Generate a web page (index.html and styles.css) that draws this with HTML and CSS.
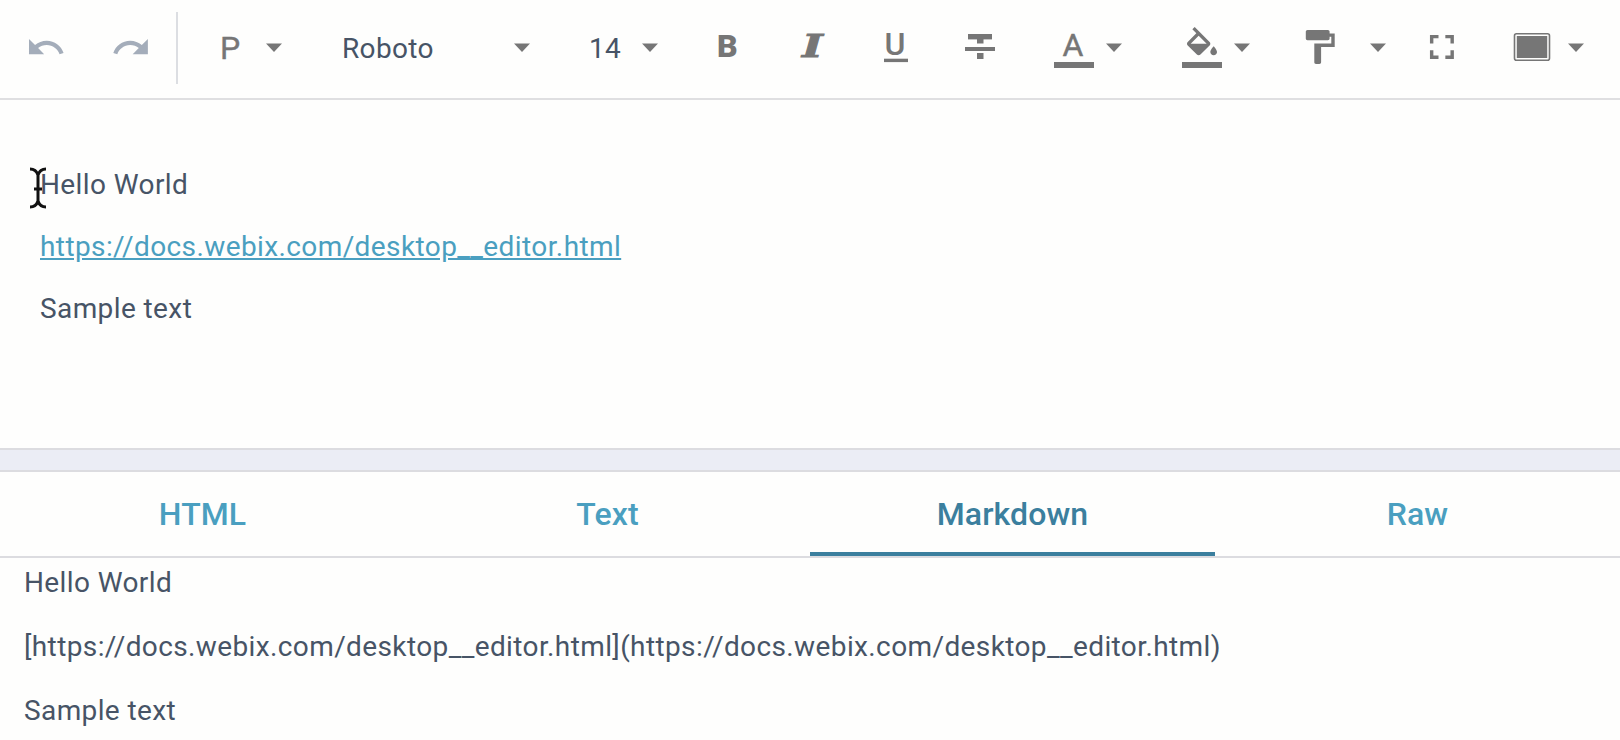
FILE: index.html
```html
<!DOCTYPE html>
<html lang="en">
<head>
<meta charset="utf-8">
<title>Editor</title>
<link rel="stylesheet" href="styles.css">
</head>
<body>
<div class="toolbar">
  <svg class="cell w88" viewBox="0 0 88 98"><path class="muted" transform="translate(25.6 27.2) scale(1.69)" d="M12.5 8c-2.65 0-5.05.99-6.9 2.6L2 7v9h9l-3.62-3.62c1.39-1.16 3.16-1.88 5.12-1.88 3.54 0 6.55 2.31 7.6 5.5l2.37-.78C21.08 11.03 17.15 8 12.5 8z"/></svg>
  <svg class="cell w88" viewBox="88 0 88 98"><path class="muted" transform="translate(110.7 27.2) scale(1.69)" d="M18.4 10.6C16.55 8.99 14.15 8 11.5 8c-4.65 0-8.58 3.03-9.96 7.22L3.9 16c1.05-3.19 4.05-5.5 7.6-5.5 1.95 0 3.73.72 5.12 1.88L13 16h9V7l-3.6 3.6z"/></svg>
  <div class="sep"></div>
  <svg class="cell w122" viewBox="178 0 122 98"><text class="label grey" x="220" y="59">P</text><polygon class="ico" points="266,43.5 282,43.5 274,52"/></svg>
  <svg class="cell w270" viewBox="300 0 270 98"><text class="label" x="342" y="58">Roboto</text><polygon class="ico" points="514,43.5 530,43.5 522,52"/></svg>
  <svg class="cell w130" viewBox="570 0 130 98"><text class="label" x="589" y="58">14</text><polygon class="ico" points="642,43.5 658,43.5 650,52"/></svg>
  <svg class="cell w80" viewBox="700 0 80 98"><text class="bold" x="717" y="57">B</text></svg>
  <svg class="cell w80" viewBox="780 0 80 98"><text class="ital" transform="translate(802 57) scale(1.4 1)">I</text></svg>
  <svg class="cell w80" viewBox="860 0 80 98"><text class="under" x="884.5" y="55">U</text><rect class="ico" x="884" y="58.7" width="24" height="3.4"/></svg>
  <svg class="cell w100" viewBox="940 0 100 98"><rect class="ico" x="968" y="34" width="24" height="5.4"/><rect class="ico" x="977" y="34" width="6.5" height="9.5"/><rect class="ico" x="965" y="47" width="30" height="4"/><rect class="ico" x="977" y="53" width="6.5" height="6"/></svg>
  <svg class="cell w130" viewBox="1040 0 130 98"><text class="accent" x="1062.5" y="56">A</text><rect class="ico" x="1054" y="62" width="40" height="6"/><polygon class="ico" points="1106,43.5 1122,43.5 1114,52"/></svg>
  <svg class="cell w120" viewBox="1170 0 120 98"><path class="ico" transform="translate(1182 27) scale(1.667)" d="M16.56 8.94L7.62 0 6.21 1.41l2.38 2.38-5.15 5.15c-.59.59-.59 1.54 0 2.12l5.5 5.5c.29.29.68.44 1.06.44s.77-.15 1.06-.44l5.5-5.5c.59-.58.59-1.53 0-2.12zM5.21 10L10 5.21 14.79 10H5.21zM19 11.5s-2 2.17-2 3.5c0 1.1.9 2 2 2s2-.9 2-2c0-1.33-2-3.5-2-3.5z"/><rect class="ico" x="1182" y="62" width="40" height="6"/><polygon class="ico" points="1234,43.5 1250,43.5 1242,52"/></svg>
  <svg class="cell w120" viewBox="1290 0 120 98"><path class="ico" transform="translate(1299 26.6) scale(1.7)" d="M18 4V3c0-.55-.45-1-1-1H5c-.55 0-1 .45-1 1v4c0 .55.45 1 1 1h12c.55 0 1-.45 1-1V6h1v4H9v11c0 .55.45 1 1 1h2c.55 0 1-.45 1-1v-9h8V4h-3z"/><polygon class="ico" points="1370,43.5 1386,43.5 1378,52"/></svg>
  <svg class="cell w80" viewBox="1410 0 80 98"><path class="ico" transform="translate(1421.4 26.4) scale(1.71)" d="M7 14H5v5h5v-2H7v-3zm-2-4h2V7h3V5H5v5zm12 7h-3v2h5v-5h-2v3zM14 5v2h3v3h2V5h-5z"/></svg>
  <svg class="cell w130" viewBox="1490 0 130 98"><rect class="frame" x="1514.5" y="33.8" width="35" height="26.5" rx="2"/><rect class="ico" x="1516.8" y="36" width="30.4" height="22"/><polygon class="ico" points="1568,43.5 1584,43.5 1576,52"/></svg>
</div>

<div class="editor">
  <p class="line">Hello World</p>
  <p class="line"><a class="link" href="#">https://docs.webix.com/desktop__editor.html</a></p>
  <p class="line">Sample text</p>
  <svg class="ibeam" viewBox="0 0 20 42"><path d="M2 2Q8 2 10 8V34Q8 40 2 40M18 2Q12 2 10 8M18 40Q12 40 10 34M6 22H14"/></svg>
</div>

<div class="splitter"></div>

<div class="tabs">
  <div class="tab">HTML</div>
  <div class="tab">Text</div>
  <div class="tab active">Markdown</div>
  <div class="tab">Raw</div>
</div>

<div class="output">
  <p class="out">Hello World</p>
  <p class="out">[https://docs.webix.com/desktop__editor.html](https://docs.webix.com/desktop__editor.html)</p>
  <p class="out">Sample text</p>
</div>
</body>
</html>
```
FILE: styles.css
```css
html, body {
  margin: 0;
  height: 740px;
  overflow: hidden;
  background: #fefefd;
  color: #475466;
  font-family: Roboto, "Liberation Sans", sans-serif;
}
.toolbar {
  display: flex;
  height: 98px;
  border-bottom: 2px solid #dfdfe1;
}
.cell { display: block; height: 98px; flex: none; }
.w80 { width: 80px; }
.w88 { width: 88px; }
.w100 { width: 100px; }
.w120 { width: 120px; }
.w122 { width: 122px; }
.w130 { width: 130px; }
.w270 { width: 270px; }
.sep {
  flex: none;
  width: 2px;
  height: 72px;
  margin-top: 12px;
  background: #dcdee2;
}
.muted { fill: #a4adba; }
.ico { fill: #767676; }
.frame { fill: none; stroke: #767676; stroke-width: 1.6; }
.label { font: 400 28px Roboto, sans-serif; fill: #475466; letter-spacing: 0.35px; }
.label.grey { fill: #767676; font-size: 32px; stroke: #767676; stroke-width: 0.4; }
.bold { font: 900 32px Roboto, sans-serif; fill: #767676; }
.ital { font: italic 700 32px "DejaVu Serif", serif; fill: #767676; stroke: #767676; stroke-width: 0.8; }
.under { font: 500 32px Roboto, sans-serif; fill: #767676; }
.accent { font: 400 32px Roboto, sans-serif; fill: #767676; stroke: #767676; stroke-width: 0.4; }

.editor {
  position: relative;
  height: 348px;
  box-sizing: border-box;
  padding: 54px 0 0 40px;
}
.line {
  margin: 0;
  height: 62px;
  line-height: 62px;
  font-size: 28px;
  letter-spacing: 0.4px;
}
.link { color: #4a9fc0; }
.ibeam {
  position: absolute;
  left: 28px;
  top: 67px;
  width: 20px;
  height: 42px;
  fill: none;
  stroke: #111;
  stroke-width: 3;
}
.splitter {
  height: 20px;
  background: #ebedf5;
  border-top: 2px solid #dcdce0;
  border-bottom: 2px solid #dcdce0;
}
.tabs {
  display: flex;
  height: 84px;
  border-bottom: 2px solid #dcdce0;
}
.tab {
  flex: 1;
  display: flex;
  align-items: center;
  justify-content: center;
  font-size: 32px;
  font-weight: 500;
  letter-spacing: 0.1px;
  color: #4a9fc0;
}
.tab.active {
  color: #3b7f9e;
  box-shadow: inset 0 -4px 0 #3b7f9e;
}
.output { padding: 0 0 0 24px; }
.out {
  margin: 0 0 14px;
  height: 50px;
  line-height: 50px;
  font-size: 28px;
  letter-spacing: 0.385px;
}
```
